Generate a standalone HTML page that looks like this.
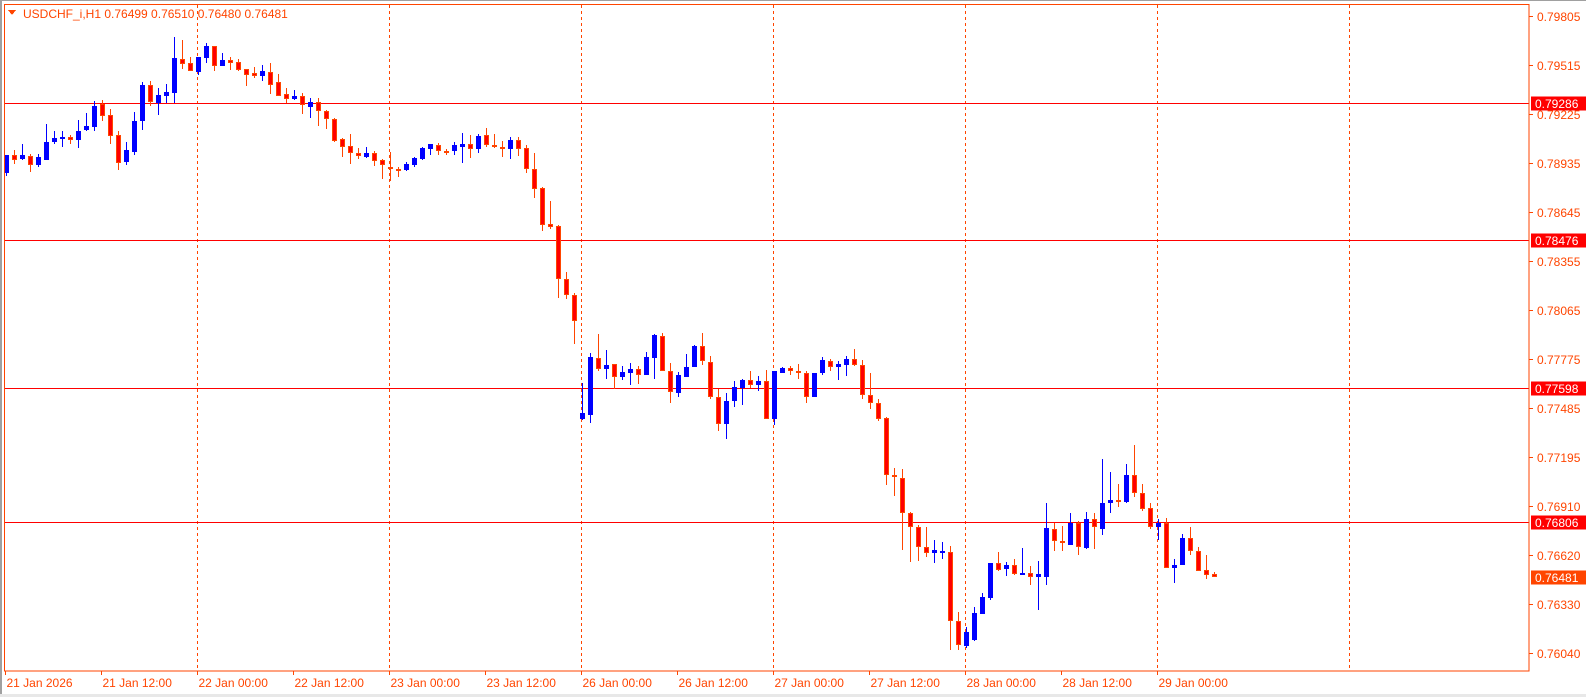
<!DOCTYPE html>
<html><head><meta charset="utf-8">
<style>
html,body{margin:0;padding:0;background:#fff;width:1586px;height:697px;overflow:hidden}
svg{display:block}
text{font-family:"Liberation Sans",sans-serif;font-size:12px}
</style></head>
<body>
<svg id="c" width="1586" height="697" xmlns="http://www.w3.org/2000/svg" shape-rendering="crispEdges">
<rect x="0" y="0" width="1586" height="697" fill="#fff"/>
<rect x="0" y="0" width="1586" height="1" fill="#a0a0a0"/>
<rect x="0" y="0" width="2" height="697" fill="#a0a0a0"/>
<rect x="0" y="694" width="1586" height="3" fill="#e8e8e8"/>
<g id="grid"></g>
<g id="levels"></g>
<g id="candles"></g>
<rect x="4.5" y="4.5" width="1524.5" height="666.5" fill="none" stroke="#ff4500" stroke-width="1"/>
<g id="axis"></g>
<polygon points="8,10 16,10 12,15" fill="#ff4500"/>
<text x="23" y="18" fill="#ff4500">USDCHF_i,H1  0.76499 0.76510 0.76480 0.76481</text>
</svg>
<script>
var NS="http://www.w3.org/2000/svg";
function el(p,t,a,txt){var e=document.createElementNS(NS,t);for(var k in a)e.setAttribute(k,a[k]);if(txt!=null)e.textContent=txt;p.appendChild(e);return e;}
var grid=document.getElementById('grid'),lv=document.getElementById('levels'),cg=document.getElementById('candles'),ax=document.getElementById('axis');
// dashed day lines
[197.5,389.5,581.5,773.5,965.5,1157.5,1349.5].forEach(function(x){
 el(grid,'line',{x1:x,y1:5,x2:x,y2:671,stroke:'#ff4500','stroke-dasharray':'3,3','stroke-width':1});
});
// horizontal levels
[[103.5,'0.79286','#ff0000'],[240.5,'0.78476','#ff0000'],[388.5,'0.77598','#ff0000'],[522.5,'0.76806','#ff0000']].forEach(function(l){
 el(lv,'line',{x1:5,y1:l[0],x2:1529,y2:l[0],stroke:'#ff0000','stroke-width':1});
});
// price ticks
var vals=['0.79805','0.79515','0.79225','0.78935','0.78645','0.78355','0.78065','0.77775','0.77485','0.77195','0.76910','0.76620','0.76330','0.76040'];
vals.forEach(function(v,i){var y=Math.round(15.7+49*i)+0.5;
 el(ax,'line',{x1:1529,y1:y,x2:1533,y2:y,stroke:'#ff4500'});
 el(ax,'text',{x:1537,y:y+4.5,fill:'#ff4500'},v);
});
// price boxes
[[103.5,'0.79286','#ff0000'],[240.5,'0.78476','#ff0000'],[388.5,'0.77598','#ff0000'],[522.5,'0.76806','#ff0000'],[577.5,'0.76481','#ff4500']].forEach(function(b){
 el(ax,'rect',{x:1531,y:b[0]-7,width:55,height:14,fill:b[2]});
 el(ax,'text',{x:1535,y:b[0]+4.5,fill:'#fff'},b[1]);
});
// time labels
var tl=['21 Jan 2026','21 Jan 12:00','22 Jan 00:00','22 Jan 12:00','23 Jan 00:00','23 Jan 12:00','26 Jan 00:00','26 Jan 12:00','27 Jan 00:00','27 Jan 12:00','28 Jan 00:00','28 Jan 12:00','29 Jan 00:00'];
tl.forEach(function(t,i){var x=5.5+96*i;
 el(ax,'line',{x1:x,y1:671,x2:x,y2:675,stroke:'#ff4500'});
 el(ax,'text',{x:x+1,y:687,fill:'#ff4500'},t);
});
// candles [bull, bodyTop, bodyBot, wickTop, wickBot]
var d=[
[1,155,173,155,176],[0,155.3,159.7,150,163.7],[1,155,159.3,144,160],[0,156,165,154,171.7],[1,157,165,154,166.7],
[1,142,159.7,124,159.7],[1,138,142,130.7,144],[1,137,139,130.7,146.7],[0,137,139.7,134.7,144],[1,131,139.7,120,147.7],
[1,126,129.7,113,130.7],[1,106,127,101,130.7],[0,103.7,115.7,100,120.7],[0,115,136,109,143.7],[0,135,162.7,131,169.7],
[1,150,162,142,165],[1,121,151.7,112,154.7],[1,85,120.7,82,129.7],[0,85,101.7,81,105.7],[1,95,103,88,114.7],
[1,92,95.7,84,103],[1,58,92.7,37,103],[0,59,63.7,40,68.7],[0,63,70.7,57,70.7],[1,57,72,57,74.7],
[1,46,57.7,43.3,62.7],[0,46,66,46,70.7],[1,60,65.7,53,65.7],[0,60,62.7,57,69.7],[0,62,69.7,59,70.7],
[0,69,74.7,69,85.7],[0,73,75.7,67,77.7],[1,71,75.7,65,80.7],[0,72,84.7,63,93.7],[0,82,96.3,74,96.3],
[0,94,98.7,88,103],[1,96,98.7,90,100],[0,96,105.3,93.3,114],[1,102,106.7,98,118],[0,102,111.3,98,126],
[0,111.3,119.3,110,128.7],[0,119.3,140.7,118,142],[0,139.3,146.7,138,156.7],[0,146,153.3,134,164],[0,153.3,156,148,158.7],
[1,153.3,156.7,146.7,158],[0,153.3,160.7,151.3,166],[0,160.3,164.7,159.3,178.7],[0,167,168.3,152,180.7],[0,169.3,170.7,167.3,176.7],
[1,164,170,162,171.3],[1,158,165.3,156.7,167.3],[1,148,159,146.7,160],[1,144,148.7,144,154.7],[0,145.3,151.3,142.7,154.7],
[0,151,152.3,149.3,154.7],[1,145.3,151.3,142,154.7],[1,144,146.7,132.7,162.7],[0,144,148.7,134.7,158],[1,136,148.7,134,152.7],
[0,135.3,145.3,128,146.7],[0,145.3,147.3,134,148],[0,147,148.5,140.7,156.7],[1,140,148.7,136.7,158.7],[0,140,148.7,136.7,156],
[0,148,168.7,144.7,172.7],[0,169.3,188.7,152.7,198],[0,188,224.7,186.7,230.7],[0,224,226.7,200.7,228.7],[0,226,279.3,224.7,298],
[0,279.3,295.3,272,298.7],[0,295.3,320.7,292.7,344],
[1,413.3,418.7,383.3,420],[1,357.3,414.7,353.3,422.7],[0,358.3,368.7,334,370.7],[1,365.3,368.7,350,378.7],[0,364,377.3,364,389.3],
[1,372,377.3,366,380],[1,369.3,372.7,362.7,385.3],[0,369.3,374.7,366,384],[1,357.3,374.7,352,374.7],[1,335,357.7,334,378.7],
[0,336,371.3,333.3,371.3],[0,371.3,392,363.3,402.7],[1,375.3,392.7,372,397.3],[1,367.3,376.7,354,376.7],[1,346,366.7,344.7,367.3],
[0,346,361.3,333.3,364.7],[0,362,397.3,356,399.3],[0,397.3,424,388.7,430.7],[1,400.7,424,393.3,439.3],[1,387.3,401.3,381.3,407.3],
[1,380,388,378.7,404.7],[0,380,385.3,370.7,388],[1,381.3,384.7,376,390.7],[0,381.3,418.7,370,418.7],[1,370.7,418.7,370.7,425.3],
[1,368,372.7,366.7,373.3],[0,368,371.3,366,375.3],[0,370.7,373.3,364,378.7],[0,372.7,396.7,371.3,403.3],[1,372.7,396.7,372.7,396.7],
[1,360,372.7,357.3,374.7],[0,360.7,367.3,359.3,370.7],[1,364,367.3,360.7,380],[1,359.3,364.7,356,376],[0,359.3,365.3,348.7,366],
[0,365.3,394.7,360,398.7],[0,395.3,402.7,373.3,408.7],[0,403.3,418.7,399.3,421.3],[0,418,474.7,417.3,485.3],[0,475.3,477.3,468,496],
[0,478,512.7,469.3,550],[0,513.3,527.3,512,562],[0,527.3,547.3,525.3,560.7],[0,547.3,552.7,527.3,557.3],[1,550,553.3,540,562.7],
[1,550.7,552.7,542,558.7],[0,552,620.7,546,650],[0,620.7,645.3,612,650],[1,632,646,626.7,648],[1,613.3,640,607.3,640.7],
[1,597.3,614,593.3,614],[1,563.3,598,563.3,600],[0,563.3,570,552,570.7],[1,565.3,568.7,562,576],[0,565.3,574,559.3,574.7],
[1,573.3,574.7,548,574.7],[0,573.3,576.7,566,584.7],[1,574,576.7,561.3,610],[1,528.3,576.7,503.3,585.3],[0,529.3,541.3,523.3,550.7],
[0,541.3,543.3,526,551.3],[1,523.3,544.7,513.3,544.7],[0,523.3,547.3,521.3,554.7],[1,519.3,548,512,548.7],[0,519.3,527.3,513.3,549.3],
[1,503.3,528.7,459.3,535.3],[1,500,503.3,472,512.7],[0,500,501.3,484,506.7],[1,475.3,501.7,464,503.3],[0,475.3,493.3,444.7,496.7],
[0,493.3,508.7,484,511.3],[0,508,527.3,503.3,529.3],[1,522.7,527.3,519.3,540],[0,522.7,568.3,518,568.3],[1,565,567.7,559.3,583.3],
[1,538,564.7,534,564.7],[0,538,550.7,527.3,554.7],[0,551.3,570.7,547.3,571.3],[0,570,574.7,555.3,578.7],[0,574,577.3,572,577.3]
];
d.forEach(function(c,i){
 var cx=Math.round(5.5+8*i);
 var col=c[0]?'#0000ff':'#ff4500';
 var wt=Math.round(c[3]),wb=Math.round(c[4]);
 el(cg,'rect',{x:cx,y:wt,width:1,height:Math.max(1,wb-wt),fill:col});
 var bt=Math.round(c[1]),bb=Math.round(c[2]);if(bb-bt<2)bb=bt+2;
 if(c[0]){el(cg,'rect',{x:cx-2,y:bt,width:5,height:bb-bt,fill:'#0000ff'});}
 else{el(cg,'rect',{x:cx-2,y:bt,width:5,height:bb-bt,fill:'#ff4500'});
   if(bb-bt>2)el(cg,'rect',{x:cx-1,y:bt+1,width:3,height:bb-bt-2,fill:'#ff0000'});}
});
</script>
</body></html>
